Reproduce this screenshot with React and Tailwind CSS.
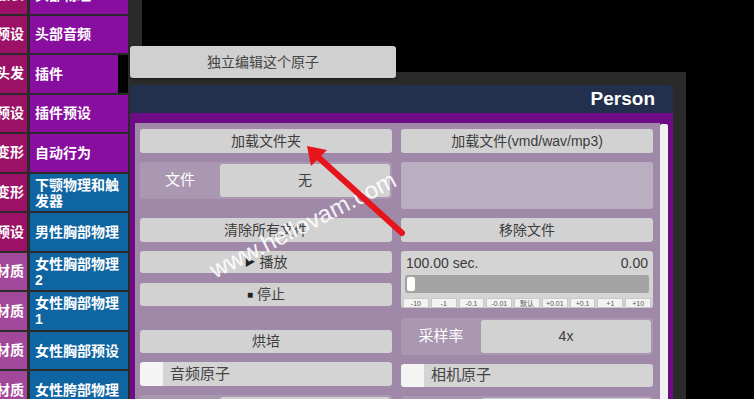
import React from "react";

const rows = [
  { l: "服装", r: ["头部物理"], rc: "p", lc: "m" },
  { l: "预设", r: ["头部音频"], rc: "p", lc: "m" },
  { l: "头发", r: ["插件"], rc: "p", lc: "m", sel: true },
  { l: "预设", r: ["插件预设"], rc: "p", lc: "m" },
  { l: "变形", r: ["自动行为"], rc: "p", lc: "m" },
  { l: "变形", r: ["下颚物理和触", "发器"], rc: "b", lc: "m" },
  { l: "预设", r: ["男性胸部物理"], rc: "b", lc: "m" },
  { l: "材质", r: ["女性胸部物理", "2"], rc: "b", lc: "m2" },
  { l: "材质", r: ["女性胸部物理", "1"], rc: "b", lc: "m2" },
  { l: "材质", r: ["女性胸部预设"], rc: "b", lc: "m2" },
  { l: "材质", r: ["女性胯部物理"], rc: "b", lc: "m2" },
];

const leftColor = { m: "bg-[#9a1165]", m2: "bg-[#a2489a]" };
const rightColor = { p: "bg-[#880ea0]", b: "bg-[#0f64a2]" };

function Sidebar() {
  return (
    <div className="w-[128px] shrink-0 flex flex-col gap-[2px] mt-[-24px] bg-[#2a2a2a] font-bold text-white text-[14px]">
      {rows.map((r, i) => (
        <div key={i} className="flex h-[37.56px] shrink-0 gap-[3px]">
          <div className={"w-[27px] overflow-hidden flex items-center justify-end pr-[3px] " + leftColor[r.lc]}>
            <span className="whitespace-nowrap shrink-0">{r.l}</span>
          </div>
          <div className="flex-1 flex">
            <div className={"flex-1 flex flex-col justify-center pl-[5px] leading-[16px] " + rightColor[r.rc]}>
              {r.r.map((t, j) => (
                <span key={j} className="whitespace-nowrap">{t}</span>
              ))}
            </div>
            {r.sel && <div className="w-[10px] bg-black" />}
          </div>
        </div>
      ))}
    </div>
  );
}

function Btn({ children, className = "" }) {
  return (
    <div className={"shrink-0 rounded-[3px] bg-[#d2d2d2] flex items-center justify-center text-[14px] text-[#3c3c3c] " + className}>
      {children}
    </div>
  );
}

function LabelField({ label, value, className = "", fieldClass = "" }) {
  return (
    <div className={"shrink-0 h-[37px] rounded-[3px] bg-[#aa97b1] flex items-center pr-[2px] " + className}>
      <div className="w-[80px] shrink-0 text-center text-white text-[15px]">{label}</div>
      <div className={"flex-1 h-[33px] rounded-[3px] bg-[#d2d2d2] flex items-center justify-center text-[14px] text-[#3c3c3c] " + fieldClass}>
        {value}
      </div>
    </div>
  );
}

function Check({ label, className = "" }) {
  return (
    <div className={"shrink-0 flex rounded-[3px] overflow-hidden " + className}>
      <div className="w-[23px] bg-[#f4f4f4]" />
      <div className="flex-1 bg-[#d4d4d4] flex items-center pl-[7px] text-[15px] text-[#444]">{label}</div>
    </div>
  );
}

const steps = ["-10", "-1", "-0.1", "-0.01", "默认", "+0.01", "+0.1", "+1", "+10"];

export default function App() {
  return (
    <div className="relative flex w-[754px] h-[399px] overflow-hidden bg-black font-['Liberation_Sans','Noto_Sans_CJK_SC',sans-serif]">
      <Sidebar />
      <div className="flex flex-col w-[558px] shrink-0">
        <div className="h-[72px] shrink-0 flex">
          <div className="w-[14px] bg-[#2a2a2a]" />
        </div>
        <div className="flex-1 min-h-0 bg-[#2a2a2a] pl-[2px] pr-[13px] pt-[13px] flex flex-col">
          <div className="h-[28px] shrink-0 bg-[#22304e] rounded-tr-[4px] flex items-center justify-end pr-[18px]">
            <span className="text-white font-bold text-[19px]">Person</span>
          </div>
          <div className="flex-1 min-h-0 bg-[#6e0c86] px-[5px] pt-[10px] flex">
            <div className="flex-1 min-h-0 overflow-hidden bg-[#a088a8] pl-[5px] pt-[6px] flex gap-[9px]">
              {/* left column */}
              <div className="w-[252px] flex flex-col">
                <Btn className="h-[24px]">加载文件夹</Btn>
                <LabelField className="mt-[9px]" label="文件" value="无" />
                <Btn className="h-[24px] mt-[19px]">清除所有文件</Btn>
                <Btn className="h-[22px] mt-[9px] gap-[4px]">
                  <span className="text-[11px] text-[#222]">▶</span>
                  <span>播放</span>
                </Btn>
                <Btn className="h-[23px] mt-[10px] gap-[4px]">
                  <span className="text-[10px] text-[#222]">■</span>
                  <span>停止</span>
                </Btn>
                <Btn className="h-[23px] mt-[24px]">烘培</Btn>
                <Check className="h-[24px] mt-[9px]" label="音频原子" />
                <LabelField className="mt-[9px]" label="" value="" />
              </div>
              {/* right column */}
              <div className="w-[252px] flex flex-col">
                <Btn className="h-[24px]">加载文件(vmd/wav/mp3)</Btn>
                <div className="shrink-0 mt-[9px] h-[47px] rounded-[3px] bg-[#b9afc0]" />
                <Btn className="h-[24px] mt-[9px]">移除文件</Btn>
                <div className="shrink-0 mt-[9px] h-[57px] rounded-[3px] bg-[#d4d4d4] flex flex-col px-[4px]">
                  <div className="flex justify-between text-[14px] text-[#3a3a3a] leading-[16px] pt-[4px] px-[1px]">
                    <span>100.00 sec.</span>
                    <span>0.00</span>
                  </div>
                  <div className="mt-[4px] h-[18px] rounded-[3px] bg-[#a3a3a3] p-[2px]">
                    <div className="w-[8px] h-full bg-white rounded-[2px]" />
                  </div>
                  <div className="mt-[5px] mx-[-2px] h-[10px] flex gap-[2px]">
                    {steps.map((s) => (
                      <div key={s} className="flex-1 bg-[#f3f3f3] border border-[#c8c8c8] flex items-center justify-center text-[7px] leading-none text-[#555]">
                        {s}
                      </div>
                    ))}
                  </div>
                </div>
                <LabelField className="mt-[10px]" label="采样率" value="4x" />
                <Check className="h-[23px] mt-[9px]" label="相机原子" />
                <LabelField className="mt-[9px]" label="" value="" />
              </div>
            </div>
            <div className="w-[8px] bg-[#f2f2f2] mt-[1px] rounded-t-[2px]" />
          </div>
        </div>
      </div>

      {/* floating button */}
      <div className="absolute left-[130px] top-[46px] w-[266px] h-[32px] rounded-[3px] bg-[#d0d0d0] shadow-[0_1px_2px_rgba(0,0,0,0.4)] flex items-center justify-center text-[14px] text-[#444]">
        独立编辑这个原子
      </div>

      {/* watermark */}
      <div className="absolute left-[303px] top-[225px] -translate-x-1/2 -translate-y-1/2 -rotate-[27deg] whitespace-nowrap text-[24px] leading-none text-white/90 pointer-events-none">
        www.hellovam.com
      </div>

      {/* red arrow */}
      <svg className="absolute left-0 top-0 pointer-events-none" width="754" height="399" viewBox="0 0 754 399">
        <line x1="402" y1="233" x2="318" y2="157" stroke="#e8141c" strokeWidth="6" strokeLinecap="round" />
        <polygon points="307,146 327,150 311,166" fill="#e8141c" />
      </svg>
    </div>
  );
}
